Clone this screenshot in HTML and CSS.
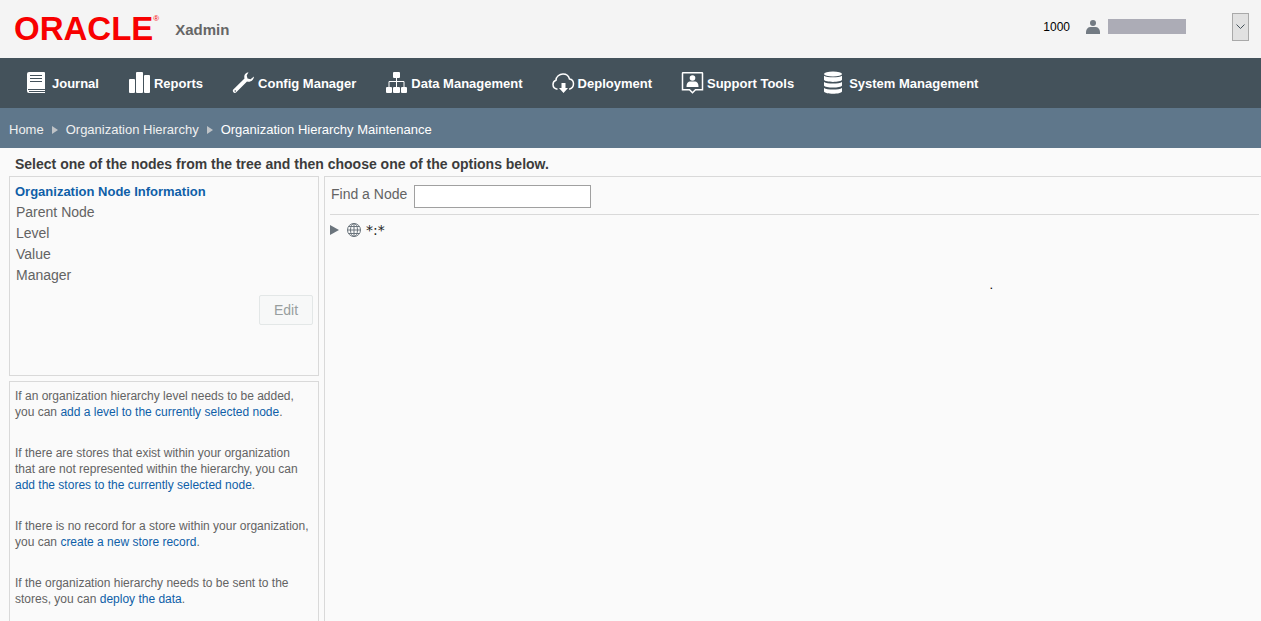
FILE: index.html
```html
<!DOCTYPE html>
<html lang="en">
<head>
    <meta charset="UTF-8">
    <meta name="viewport" content="width=device-width, initial-scale=1.0">
    <title>Xadmin - Organization Hierarchy Maintenance</title>
    <link rel="stylesheet" href="styles.css">
</head>
<body>
    <header class="header">
        <div class="logo">ORACLE<span class="reg">®</span></div>
        <div class="app-name">Xadmin</div>
        <div class="user">
            <span class="store-id">1000</span>
            <svg class="user-icon" width="14" height="14" viewBox="0 0 14 14">
                <circle cx="7" cy="3" r="3"/>
                <path d="M0 14v-2c0-3 2-5 4.500-5h5c2.500 0 4.500 2 4.500 5v2z"/>
            </svg>
            <span class="user-name"></span>
            <div class="user-menu">
                <select aria-label="User menu"><option></option></select>
                <svg width="9" height="6" viewBox="0 0 9 6"><path d="M.5.5l4 4 4-4"/></svg>
            </div>
        </div>
    </header>

    <nav class="menu">
        <a href="#">
            <svg width="24" height="24" viewBox="0 0 24 24">
                <path fill="#fff" d="M3 1h15q1 0 1 1v20H3q-2 0-2-2V3q0-2 2-2z"/>
                <path stroke="#44525b" d="M4 4.500h12M4 7.500h12M4 10.500h12M2 18.500h17M3 20.500h16"/>
            </svg>
            <span>Journal</span>
        </a>
        <a href="#">
            <svg width="24" height="24" viewBox="0 0 24 24">
                <rect fill="#fff" x="1" y="8" width="6" height="14" rx="1"/>
                <rect fill="#fff" x="8" y="1" width="7" height="21" rx="1"/>
                <rect fill="#fff" x="16" y="4" width="6" height="18" rx="1"/>
            </svg>
            <span>Reports</span>
        </a>
        <a href="#">
            <svg width="24" height="24" viewBox="0 0 24 24">
                <path fill="#fff" d="M16.500 1.200c-3 .3-5 3-4 6.300L1.300 18.500c-1.500 1.700.7 4.400 2.700 3L15 10.600c3.500 1 6.800-1.400 7-5l-3.500 2.600-3-.7-.8-3z"/>
                <circle cx="3.300" cy="20" r=".8" fill="#44525b"/>
            </svg>
            <span>Config Manager</span>
        </a>
        <a href="#">
            <svg width="24" height="24" viewBox="0 0 24 24">
                <path fill="none" stroke="#fff" d="M11.500 6v10M4 16v-5.500h15V16"/>
                <g fill="#fff">
                    <rect x="8" y="1" width="7" height="6" rx="1"/>
                    <rect x="1" y="16" width="6" height="6" rx="1"/>
                    <rect x="8" y="16" width="7" height="6" rx="1"/>
                    <rect x="16" y="16" width="6" height="6" rx="1"/>
                </g>
            </svg>
            <span>Data Management</span>
        </a>
        <a href="#">
            <svg width="24" height="24" viewBox="0 0 24 24">
                <path fill="none" stroke="#fff" stroke-width="1.500" d="M5.500 18.200C2.800 17.800 1 16 1 13.500c0-2 1.300-3.600 3-4.200C4 5.600 7.500 3 11 3c3.200 0 5.800 2 6.500 5 2.500.4 4 2.300 4 4.800 0 2.600-1.500 4.600-4.300 5.400"/>
                <path fill="#fff" d="M9.500 12h4v5H16l-4.500 5L7 17h2.500z"/>
            </svg>
            <span>Deployment</span>
        </a>
        <a href="#">
            <svg width="24" height="24" viewBox="0 0 24 24">
                <path fill="none" stroke="#fff" stroke-width="1.500" d="M2 1.800h19q.5 0 .5.500v16.500h-7l-3 3-3-3h-7V2.300q0-.5.500-.5z"/>
                <circle fill="#fff" cx="11.500" cy="7" r="2.800"/>
                <path fill="#fff" d="M5.500 16c0-4 1.500-5.500 4-5.500h4c2.500 0 4 1.500 4 5.500z"/>
            </svg>
            <span>Support Tools</span>
        </a>
        <a href="#">
            <svg width="24" height="24" viewBox="0 0 24 24">
                <g fill="#fff">
                    <ellipse cx="10" cy="3" rx="9" ry="2.500"/>
                    <path d="M1 4.800c3 2 15 2 18 0v4c-1 2.800-17 2.800-18 0z"/>
                    <path d="M1 11c3 2 15 2 18 0v3.500c-1 2.800-17 2.800-18 0z"/>
                    <path d="M1 17c3 2 15 2 18 0v3.500c-1 3-17 3-18 0z"/>
                </g>
            </svg>
            <span>System Management</span>
        </a>
    </nav>

    <div class="breadcrumb">
        <a href="#">Home</a>
        <i class="sep"></i>
        <a href="#">Organization Hierarchy</a>
        <i class="sep"></i>
        <span>Organization Hierarchy Maintenance</span>
    </div>

    <h1>Select one of the nodes from the tree and then choose one of the options below.</h1>

    <main class="content">
        <div class="side">
            <section class="panel node-info">
                <h2>Organization Node Information</h2>
                <ul>
                    <li>Parent Node</li>
                    <li>Level</li>
                    <li>Value</li>
                    <li>Manager</li>
                </ul>
                <button type="button" disabled>Edit</button>
            </section>
            <section class="panel options">
                <p>If an organization hierarchy level needs to be added, you can <a href="#">add a level to the currently selected node</a>.</p>
                <p>If there are stores that exist within your organization that are not represented within the hierarchy, you can <a href="#">add the stores to the currently selected node</a>.</p>
                <p>If there is no record for a store within your organization, you can <a href="#">create a new store record</a>.</p>
                <p>If the organization hierarchy needs to be sent to the stores, you can <a href="#">deploy the data</a>.</p>
            </section>
        </div>
        <section class="tree">
            <div class="find">
                <label for="findNode">Find a Node</label>
                <input type="text" id="findNode">
            </div>
            <div class="node">
                <i class="toggle"></i>
                <svg width="14" height="14" viewBox="0 0 14 14">
                    <g fill="none" stroke="#6b757d">
                        <circle cx="7" cy="7" r="6.500"/>
                        <ellipse cx="7" cy="7" rx="3.500" ry="6.500"/>
                        <path d="M7 .5v13M.5 7h13M1.500 3.500h11M1.500 10.500h11"/>
                    </g>
                </svg>
                <span>*:*</span>
            </div>
            <div class="message">.</div>
        </section>
    </main>
</body>
</html>
```

FILE: styles.css
```css
* {
    box-sizing: border-box;
}

body {
    margin: 0;
    min-height: 100vh;
    display: flex;
    flex-direction: column;
    background-color: #fafafa;
    color: #636363;
    font-family: "Liberation Sans", Arial, sans-serif;
    font-size: 13px;
}

a {
    color: #0f5fa8;
    text-decoration: none;
}

.header {
    display: flex;
    align-items: center;
    height: 58px;
    padding: 0 12px 0 14px;
    background-color: #f4f4f4;
}

.logo {
    display: flex;
    color: #f80000;
    font-size: 33px;
    font-weight: bold;
    line-height: 40px;
}

.reg {
    font-size: 8px;
    font-weight: normal;
    line-height: 20px;
}

.app-name {
    margin-left: 16px;
    color: #666;
    font-size: 15px;
    font-weight: bold;
}

.user {
    display: flex;
    align-items: center;
    margin-left: auto;
    padding-bottom: 5px;
    color: #000;
    font-size: 12px;
}

.user-icon {
    margin: 0 8px 0 16px;
    fill: #737b83;
}

.user-name {
    width: 78px;
    height: 15px;
    background-color: #acacb6;
}

.user-menu {
    display: grid;
    place-items: center;
    margin-left: 46px;
}

.user-menu select,
.user-menu svg {
    grid-area: 1 / 1;
}

.user-menu select {
    appearance: none;
    width: 17px;
    height: 28px;
    padding: 0;
    border: 1px solid #a9a9a9;
    border-radius: 0;
    background-color: #e1e1e1;
}

.user-menu svg {
    fill: none;
    stroke: #44525b;
    pointer-events: none;
}

.menu {
    display: flex;
    gap: 29px;
    height: 50px;
    padding: 0 26px;
    background-color: #44525b;
}

.menu a {
    display: flex;
    align-items: center;
    gap: 2px;
    color: #fff;
    font-weight: bold;
    white-space: nowrap;
}

.breadcrumb {
    display: flex;
    align-items: center;
    gap: 8px;
    height: 40px;
    padding: 3px 9px 0;
    background-color: #5f778b;
    color: #fff;
}

.breadcrumb a {
    color: #f0f0f0;
}

.sep {
    border-left: 6px solid #bfc3c7;
    border-top: 4px solid transparent;
    border-bottom: 4px solid transparent;
}

h1 {
    margin: 0;
    padding: 8px 15px 4px;
    color: #3c3c3c;
    font-size: 14px;
    line-height: 16px;
}

.content {
    display: flex;
    flex: 1;
    gap: 5px;
    padding-left: 9px;
}

.side {
    display: flex;
    flex-direction: column;
    gap: 5px;
    flex: 0 0 310px;
}

.panel {
    border: 1px solid #d9d9d9;
    padding: 5px;
}

.node-info {
    display: flex;
    flex-direction: column;
    min-height: 200px;
}

h2 {
    margin: 0;
    color: #0f5fa8;
    font-size: 13px;
    line-height: 20px;
}

.node-info ul {
    margin: 0;
    padding: 0 1px;
    list-style: none;
    font-size: 14px;
    line-height: 21px;
}

.node-info button {
    align-self: flex-end;
    width: 54px;
    height: 30px;
    margin-top: 9px;
    border: 1px solid #e3e7e7;
    border-radius: 2px;
    background-color: #f7f8f8;
    color: #989e9e;
    font-family: inherit;
    font-size: 14px;
}

.options {
    flex: 1;
    border-bottom: none;
    padding: 6px 5px;
    font-size: 12px;
    line-height: 16px;
}

.options p {
    margin: 0 0 25px;
}

.options p:last-child {
    margin-bottom: 0;
}

.tree {
    flex: 1;
    border: 1px solid #d9d9d9;
    border-right: none;
    border-bottom: none;
    padding: 0 2px 0 5px;
}

.find {
    display: flex;
    align-items: flex-start;
    gap: 7px;
    padding: 8px 1px 6px;
    border-bottom: 1px solid #d9d9d9;
}

.find label {
    font-size: 14px;
    line-height: 18px;
}

.find input {
    width: 177px;
    height: 23px;
    border: 1px solid #a0a0a0;
    background-color: #fff;
    font-size: 13px;
}

.node {
    display: flex;
    align-items: center;
    height: 30px;
    color: #222;
    font-family: "DejaVu Sans", sans-serif;
    font-size: 14px;
}

.toggle {
    margin-right: 8px;
    border-left: 9px solid #6b757d;
    border-top: 5px solid transparent;
    border-bottom: 5px solid transparent;
}

.node span {
    margin-left: 5px;
}

.message {
    padding: 32px 0 0 71%;
    color: #000;
}
```
